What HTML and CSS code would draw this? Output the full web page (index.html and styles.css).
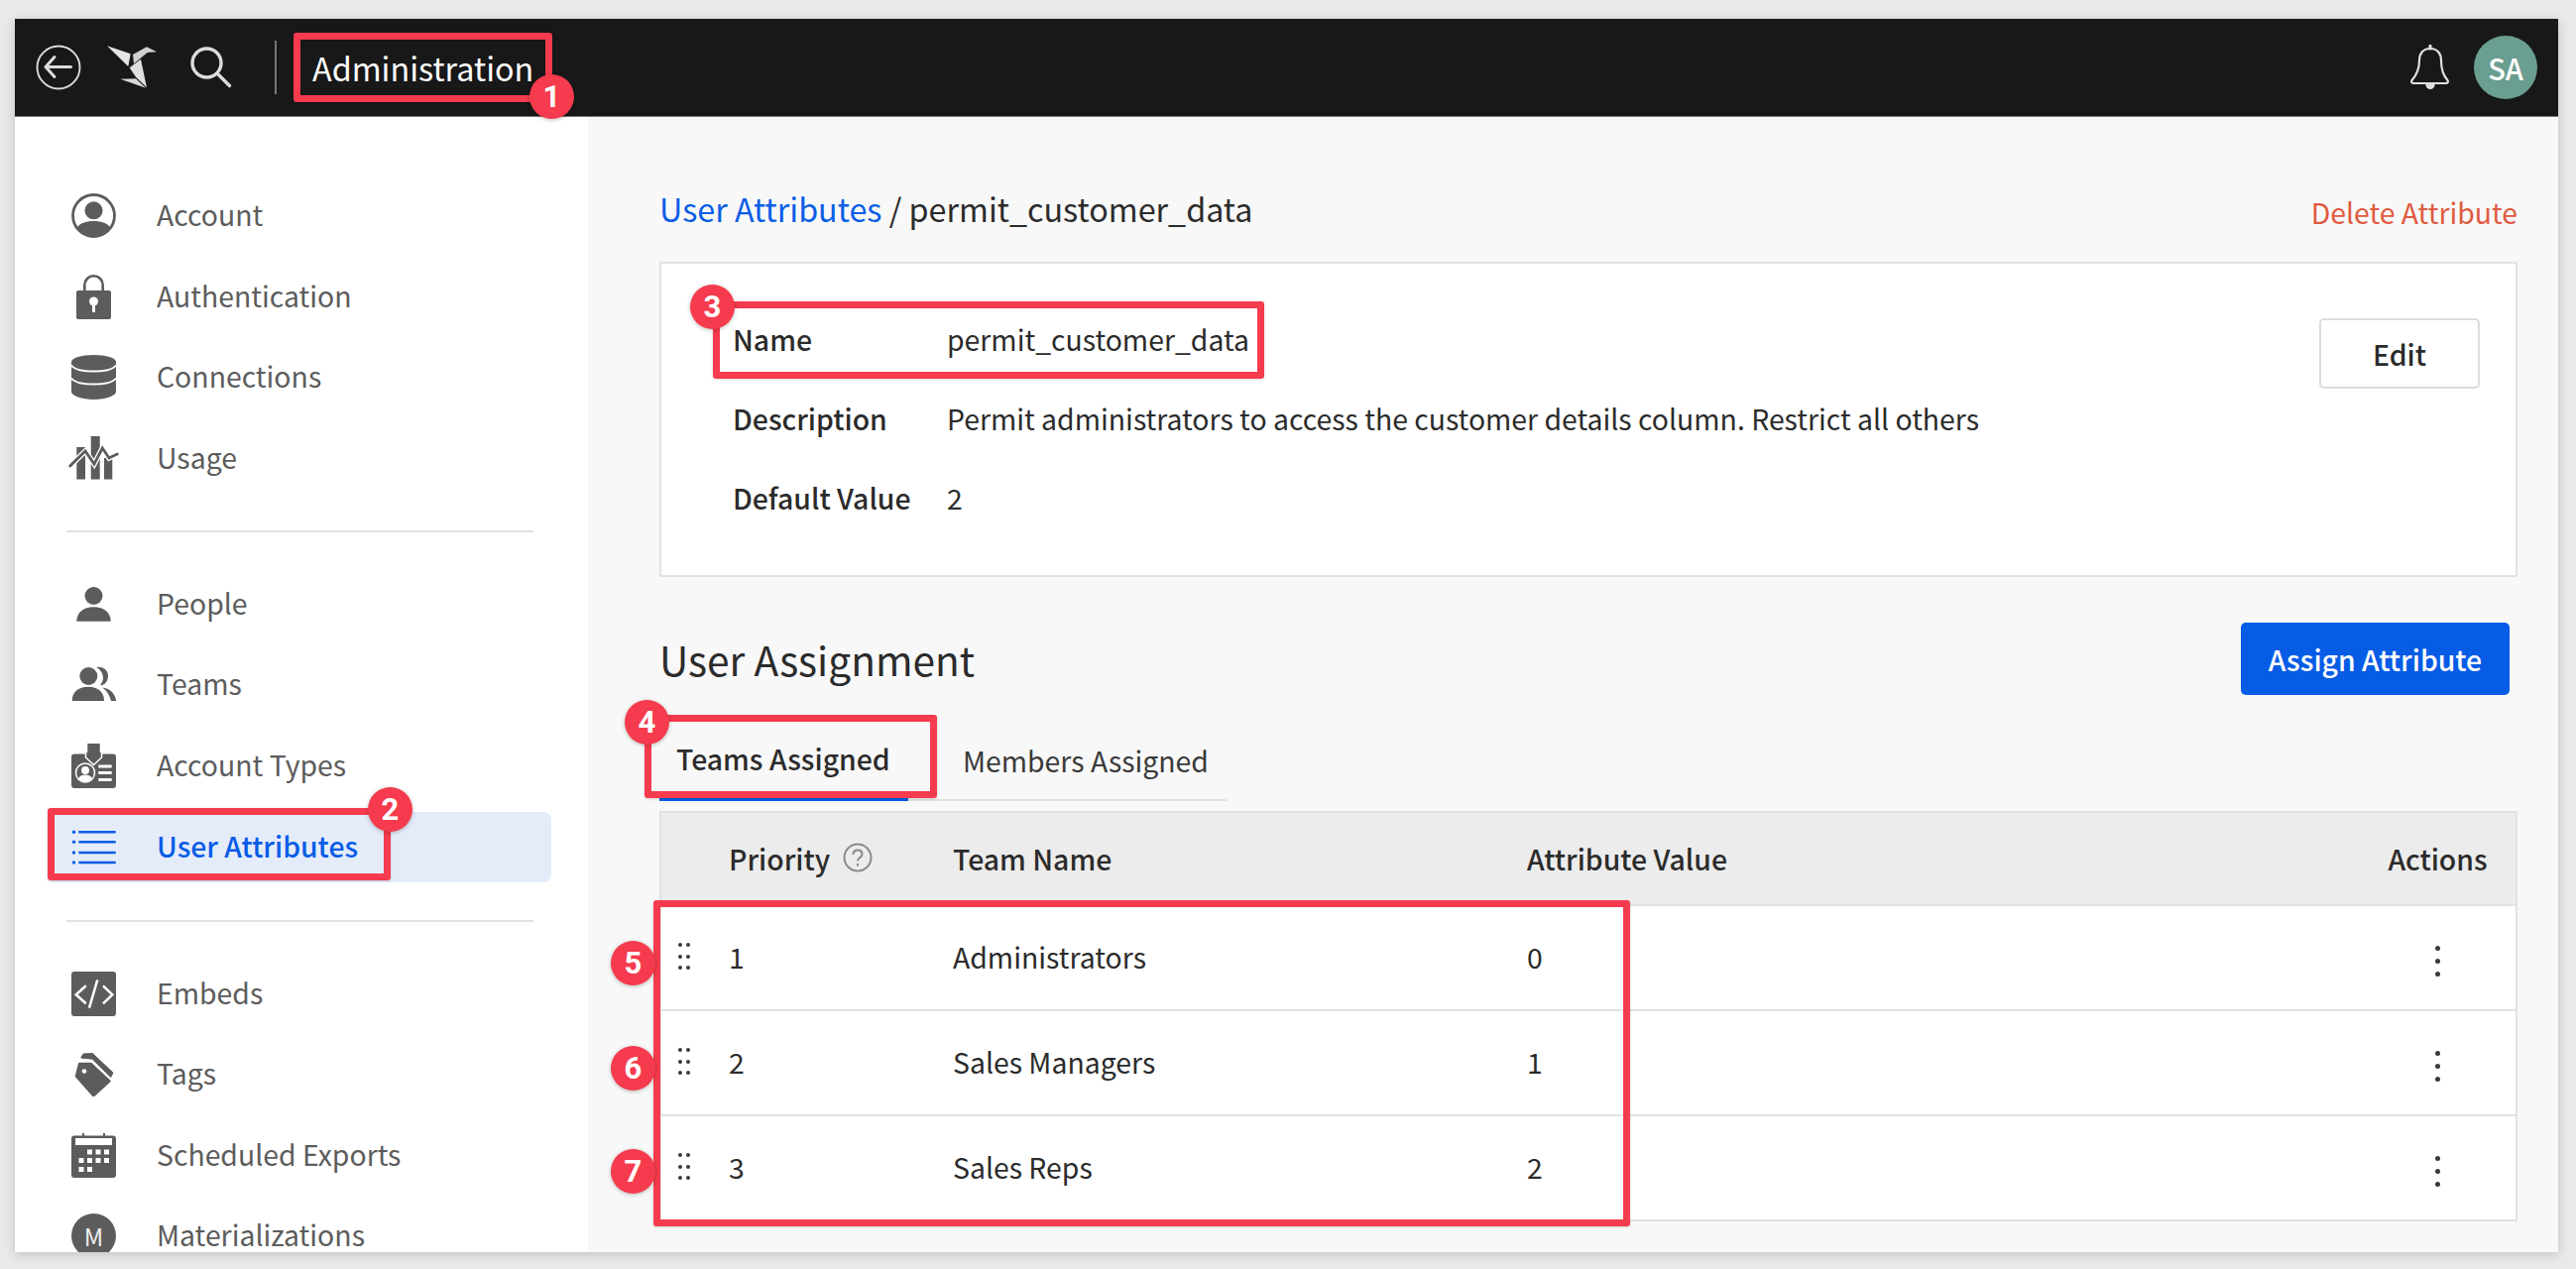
FILE: index.html
```html
<!DOCTYPE html>
<html lang="en">
<head>
  <meta charset="UTF-8" />
  <meta name="viewport" content="width=device-width, initial-scale=1.0" />
  <title>User Attributes</title>
  <link rel="stylesheet" href="styles.css">
</head>
<body>
  <div class="page">
    <div class="window">
      <header class="topbar">
        <svg class="top-icon back-icon" viewBox="0 0 46 46" fill="none" stroke="#dcdcdc" stroke-width="1.900" stroke-linecap="round" stroke-linejoin="round">
          <circle cx="23" cy="23" r="21.500"/>
          <path d="M35.500 22.500H10M19 12.500l-9 10 9 10" stroke-width="3"/>
        </svg>
        <svg class="top-icon logo-icon" viewBox="265 52 150 130">
          <path d="M265 52L336 76 329 114z" fill="#e4e4e4"/>
          <path d="M343 78L385 55 415 70 387 72 346 106z" fill="#d0d0d0"/>
          <path d="M333 118L367 92 385 178 352 146z" fill="#dedede"/>
          <path d="M305 152L352 151 382 179z" fill="#d6d6d6"/>
        </svg>
        <svg class="top-icon search-icon" viewBox="0 0 42 42" fill="none" stroke="#dcdcdc" stroke-width="3.400" stroke-linecap="round">
          <circle cx="16.500" cy="16.500" r="14.500"/>
          <path d="M27 27L39.500 39.500"/>
        </svg>
        <span class="top-divider"></span>
        <span class="top-title">Administration</span>
        <svg class="bell-icon" viewBox="0 0 40 46" fill="none" stroke="#e0e0e0" stroke-width="2.200" stroke-linejoin="round">
          <path d="M20 4c-7.500 0-11 5.500-11 12 0 9-3 15-7.500 20-1 1.500 0 3 1.500 3h33c1.500 0 2.500-1.500 1.500-3C33 31 31 25 31 16c0-6.500-3.500-12-11-12z"/>
          <path d="M20 1v3" stroke-width="3" stroke-linecap="round"/>
          <path d="M16.500 40.500a3.500 3.500 0 0 0 7 0z" fill="#e0e0e0"/>
        </svg>
        <span class="avatar">SA</span>
      </header>

      <div class="main">
        <nav class="sidebar">
          <div class="nav-group">
            <a class="nav-item">
              <svg class="nav-icon" viewBox="0 0 45 45">
                <circle cx="22.500" cy="22.500" r="21" fill="none" stroke="#5c5c5c" stroke-width="2.800"/>
                <circle cx="22.500" cy="17.300" r="9" fill="#5c5c5c"/>
                <path d="M5.500 35c3-5 9-7 17-7s14 2 17 7c-4 5-10 8.500-17 8.500S9.500 40 5.500 35z" fill="#5c5c5c"/>
              </svg>
              <span>Account</span>
            </a>
            <a class="nav-item">
              <svg class="nav-icon" viewBox="0 0 45 45">
                <path d="M13.300 18V9.200a9.200 9.200 0 0 1 18.400 0V18" transform="translate(0 1.300)" fill="none" stroke="#5c5c5c" stroke-width="2.600"/>
                <rect x="5" y="16" width="35" height="29" rx="2" fill="#5c5c5c"/>
                <circle cx="22.500" cy="27" r="4.500" fill="#fff"/>
                <path d="M21 29h3v9h-3z" fill="#fff"/>
              </svg>
              <span>Authentication</span>
            </a>
            <a class="nav-item">
              <svg class="nav-icon" viewBox="0 0 45 45">
                <path d="M0 7c0-4 10-7 22.500-7S45 3 45 7v30c0 4-10 8-22.500 8S0 41 0 37z" fill="#5c5c5c"/>
                <path d="M0 10.500c3 4 12 6 22.500 6S42 14.500 45 10.500M0 23.500c3 4 12 6 22.500 6S42 27.500 45 23.500" fill="none" stroke="#fff" stroke-width="1.800"/>
              </svg>
              <span>Connections</span>
            </a>
            <a class="nav-item">
              <svg class="nav-icon usage-icon" viewBox="0 0 45 45">
                <path d="M5.300 11H14v32.500H5.300zM19.700 0h9v43.500h-9zM33 22h8.300v21.500H33z" fill="#5c5c5c"/>
                <path d="M-1.300 30L14 15l9 13 8.300-16L38 22l8.300-4" fill="none" stroke="#fff" stroke-width="5.500"/>
                <path d="M-1.300 30L14 15l9 13 8.300-16L38 22l8.300-4" fill="none" stroke="#5c5c5c" stroke-width="2.800" stroke-linecap="round"/>
              </svg>
              <span>Usage</span>
            </a>
          </div>
          <div class="nav-divider"></div>
          <div class="nav-group">
            <a class="nav-item">
              <svg class="nav-icon" viewBox="0 0 45 45" fill="#5c5c5c">
                <circle cx="22.500" cy="14" r="9"/>
                <path d="M5.300 39.700C5.300 31 12 25.300 22.500 25.300S39.700 31 39.700 39.700z"/>
              </svg>
              <span>People</span>
            </a>
            <a class="nav-item">
              <svg class="nav-icon" viewBox="0 0 45 45" fill="#5c5c5c">
                <circle cx="17.300" cy="14" r="9"/>
                <path d="M.7 39C.7 30 7 24.700 17 24.700S33 30 33 39z"/>
                <path d="M25 5c8-1 12 4 12 9s-4 10-8 9c4-4 5-13-4-18zM31 25.500c8 .5 13 6.500 14.300 13.500H40c-2-7-5-11-9-13.500z"/>
              </svg>
              <span>Teams</span>
            </a>
            <a class="nav-item">
              <svg class="nav-icon" viewBox="0 0 45 45">
                <rect y="10.500" width="45" height="34.500" rx="3" fill="#5c5c5c"/>
                <path d="M14.500 9v5l8 7.500 8-7.500V9" fill="#5c5c5c" stroke="#fff" stroke-width="1.500"/>
                <path d="M16.300 0h12.400v13l-6.200 6-6.200-6z" fill="#5c5c5c"/>
                <circle cx="14" cy="29.500" r="9.500" fill="none" stroke="#fff" stroke-width="1.500"/>
                <circle cx="14" cy="27" r="4" fill="#fff"/>
                <path d="M7 35.500c1-3 4-4 7-4s6 1 7 4c-2 2-4.500 3-7 3s-5-1-7-3z" fill="#fff"/>
                <path d="M27.300 21.500h13.400v3H27.300zM27.300 28h13.400v3H27.300zM27.300 35h13.400v3H27.300z" fill="#fff"/>
              </svg>
              <span>Account Types</span>
            </a>
            <a class="nav-item active">
              <svg class="nav-icon" viewBox="0 0 45 45" fill="#075ce6">
                <circle cx="2.500" cy="7.300" r="1.700"/>
                <circle cx="2.500" cy="17.300" r="1.700"/>
                <circle cx="2.500" cy="28" r="1.700"/>
                <circle cx="2.500" cy="38" r="1.700"/>
                <path d="M7.300 6h37.400v2.600H7.300zM7.300 16h37.400v2.600H7.300zM7.300 26.700h37.400v2.600H7.300zM7.300 36.700h37.400v2.600H7.300z"/>
              </svg>
              <span>User Attributes</span>
            </a>
          </div>
          <div class="nav-divider second"></div>
          <div class="nav-group">
            <a class="nav-item">
              <svg class="nav-icon" viewBox="0 0 45 45">
                <rect width="45" height="45" rx="3" fill="#5c5c5c"/>
                <path d="M14.700 14.300L4.700 23.300l10 9M32 14.300l9.300 9-9.300 9M26.300 8.300L18 36.700" fill="none" stroke="#fff" stroke-width="2.500"/>
              </svg>
              <span>Embeds</span>
            </a>
            <a class="nav-item">
              <svg class="nav-icon" viewBox="0 0 45 45">
                <path d="M8 11.800h11.700l19 17.700-16.400 15L4.700 24.500z" fill="#5c5c5c" stroke="#5c5c5c" stroke-width="2" stroke-linejoin="round"/>
                <path d="M9.700 6l2.300-4 9.300-.5L42 21l-2.300 4.500-18.400-18.300z" fill="#5c5c5c" stroke="#5c5c5c" stroke-linejoin="round"/>
                <circle cx="13" cy="19.500" r="2.300" fill="#fff"/>
              </svg>
              <span>Tags</span>
            </a>
            <a class="nav-item">
              <svg class="nav-icon" viewBox="0 0 45 45" fill="#5c5c5c">
                <path d="M3 2.500h8V0h2v2.500h19V0h2v2.500h8a3 3 0 0 1 3 3V42a3 3 0 0 1-3 3H3a3 3 0 0 1-3-3V5.500a3 3 0 0 1 3-3z"/>
                <path d="M4 5h37v7H4zM16 16.500h5v5h-5zM24.500 16.500h5v5h-5zM33 16.500h5v5h-5zM7.500 25h5v5h-5zM16 25h5v5h-5zM24.500 25h5v5h-5zM33 25h5v5h-5zM7.500 34h5v5h-5zM16 34h5v5h-5z" fill="#fff"/>
              </svg>
              <span>Scheduled Exports</span>
            </a>
            <a class="nav-item">
              <span class="nav-icon m-icon">M</span>
              <span>Materializations</span>
            </a>
          </div>
        </nav>

        <section class="content">
          <div class="crumb-row">
            <div class="crumbs"><a class="crumb-link">User Attributes</a> / permit_customer_data</div>
            <a class="delete-link">Delete Attribute</a>
          </div>

          <div class="card">
            <dl class="details">
              <dt>Name</dt>
              <dd>permit_customer_data</dd>
              <dt>Description</dt>
              <dd>Permit administrators to access the customer details column. Restrict all others</dd>
              <dt>Default Value</dt>
              <dd>2</dd>
            </dl>
            <button class="edit-btn">Edit</button>
          </div>

          <div class="assign-row">
            <h2>User Assignment</h2>
            <button class="assign-btn">Assign Attribute</button>
          </div>

          <div class="tabs">
            <a class="tab active">Teams Assigned</a>
            <a class="tab">Members Assigned</a>
          </div>

          <table class="teams">
            <thead>
              <tr>
                <th class="col-handle"></th>
                <th class="col-priority">
                  <span class="priority-head">Priority
                    <svg class="help-icon" viewBox="0 0 30 30" fill="none" stroke="#8a8a8a" stroke-width="2">
                      <circle cx="15" cy="15" r="13.500"/>
                      <path d="M10.500 12c0-3 2-4.500 4.500-4.500s4.500 1.500 4.500 4c0 3.500-4.500 3.500-4.500 7"/>
                      <path d="M15 21v2.500"/>
                    </svg>
                  </span>
                </th>
                <th class="col-team">Team Name</th>
                <th class="col-value">Attribute Value</th>
                <th class="col-actions">Actions</th>
              </tr>
            </thead>
            <tbody>
              <tr>
                <td><span class="handle"><i></i><i></i><i></i><i></i><i></i><i></i></span></td>
                <td>1</td>
                <td>Administrators</td>
                <td>0</td>
                <td class="col-actions"><span class="kebab"><i></i><i></i><i></i></span></td>
              </tr>
              <tr>
                <td><span class="handle"><i></i><i></i><i></i><i></i><i></i><i></i></span></td>
                <td>2</td>
                <td>Sales Managers</td>
                <td>1</td>
                <td class="col-actions"><span class="kebab"><i></i><i></i><i></i></span></td>
              </tr>
              <tr>
                <td><span class="handle"><i></i><i></i><i></i><i></i><i></i><i></i></span></td>
                <td>3</td>
                <td>Sales Reps</td>
                <td>2</td>
                <td class="col-actions"><span class="kebab"><i></i><i></i><i></i></span></td>
              </tr>
            </tbody>
          </table>
        </section>
      </div>
    </div>

    <!-- Red callouts drawn over the screenshot -->
    <div class="callout box-title"></div>
    <div class="callout box-nav"></div>
    <div class="callout box-name"></div>
    <div class="callout box-tab"></div>
    <div class="callout box-rows"></div>
    <span class="badge badge-1">1</span>
    <span class="badge badge-2">2</span>
    <span class="badge badge-3">3</span>
    <span class="badge badge-4">4</span>
    <span class="badge badge-5">5</span>
    <span class="badge badge-6">6</span>
    <span class="badge badge-7">7</span>
  </div>
</body>
</html>
```

FILE: styles.css
```css
* {
  box-sizing: border-box;
}

html, body {
  margin: 0;
  padding: 0;
}

body {
  font-family: "Noto Sans CJK SC", "Noto Sans", sans-serif;
  font-size: 28.4px;
  color: #2b2b2b;
  background-color: #e9e9e9;
}

.page {
  position: relative;
  width: 2598px;
  height: 1280px;
  padding: 19px 18px 17px 15px;
  overflow: hidden;
}

.window {
  display: flex;
  flex-direction: column;
  height: 1244px;
  overflow: hidden;
  background-color: #f8f8f8;
  box-shadow: 0 2px 10px rgba(0, 0, 0, 0.18);
}

/* Top bar */
.topbar {
  display: flex;
  align-items: center;
  flex: none;
  height: 99px;
  padding: 0 21px 0 21px;
  background-color: #181818;
  border-bottom: 1px solid #777;
}

.top-icon {
  flex: none;
}

.back-icon {
  width: 46px;
  height: 46px;
}

.logo-icon {
  width: 50px;
  height: 44px;
  margin-left: 26px;
}

.search-icon {
  width: 42px;
  height: 42px;
  margin-left: 34px;
}

.top-divider {
  width: 2px;
  height: 54px;
  margin-left: 43px;
  background-color: #777;
}

.top-title {
  margin-left: 36px;
  font-size: 32.3px;
  line-height: 44px;
  color: #fff;
}

.bell-icon {
  width: 40px;
  height: 46px;
  margin-left: auto;
}

.avatar {
  display: flex;
  align-items: center;
  justify-content: center;
  width: 64px;
  height: 64px;
  margin-left: 24px;
  border-radius: 50%;
  background-color: #6a9e90;
  color: #fff;
  font-size: 29px;
  font-weight: 500;
}

.main {
  display: flex;
  flex: 1;
  min-height: 0;
}

/* Sidebar */
.sidebar {
  flex: none;
  width: 578px;
  padding: 64px 37px 0 33px;
  background-color: #fff;
}

.nav-group {
  display: flex;
  flex-direction: column;
  gap: 10.6px;
}

.nav-item {
  display: flex;
  align-items: center;
  flex: none;
  height: 71px;
  padding-left: 24px;
  border-radius: 8px;
  color: #5c5c5c;
  line-height: 34px;
}

.nav-item span:last-child {
  margin-bottom: 3px;
}

.nav-icon {
  flex: none;
  width: 45px;
  height: 45px;
  margin-right: 41px;
}

.usage-icon {
  overflow: visible;
}

.nav-item.active {
  background-color: #e4ecfa;
  color: #075ce6;
  font-weight: 500;
}

.m-icon {
  display: flex;
  align-items: center;
  justify-content: center;
  border-radius: 50%;
  background-color: #5c5c5c;
  color: #eee;
  font-size: 24px;
  line-height: 24px;
}

.nav-divider {
  height: 2px;
  margin: 37px 18px 37px 19px;
  background-color: #e2e2e2;
}

.nav-divider.second {
  margin-top: 38px;
}

/* Content */
.content {
  flex: 1;
  padding: 0 41px 0 72px;
}

.crumb-row {
  display: flex;
  align-items: center;
  justify-content: space-between;
  height: 146px;
  padding-top: 38px;
}

.crumbs {
  font-size: 32.3px;
  color: #2b2b2b;
}

.crumb-link {
  color: #0a5de6;
}

.delete-link {
  margin-top: 6px;
  color: #e05a40;
}

.card {
  display: flex;
  justify-content: space-between;
  height: 318px;
  padding: 55px 36px 0 72px;
  background-color: #fff;
  border: 2px solid #e2e2e2;
}

.details {
  display: grid;
  grid-template-columns: 216px 1fr;
  grid-auto-rows: 80px;
  align-items: center;
  margin: -20px 0 0 0;
  height: 240px;
}

.details dt {
  font-weight: 500;
}

.details dd {
  margin: 0;
}

.edit-btn {
  width: 162px;
  height: 71px;
  background-color: #fff;
  border: 2px solid #dcdcdc;
  border-radius: 5px;
  font-family: inherit;
  font-size: 28.4px;
  font-weight: 500;
  color: #2b2b2b;
}

.assign-row {
  display: flex;
  align-items: center;
  justify-content: space-between;
  height: 73px;
  margin: 46px 8px 0 0;
}

.assign-row h2 {
  margin: 0;
  font-size: 40.6px;
  font-weight: 400;
  color: #2b2b2b;
}

.assign-btn {
  width: 271px;
  height: 73px;
  background-color: #075ce6;
  border: 0;
  border-radius: 5px;
  font-family: inherit;
  font-size: 28.4px;
  font-weight: 500;
  color: #fff;
}

.tabs {
  display: flex;
  width: 572px;
  height: 81px;
  margin-top: 26px;
  border-bottom: 2px solid #e2e2e2;
}

.tab {
  display: flex;
  align-items: center;
  flex: none;
  height: 81px;
  padding-left: 55px;
  padding-bottom: 3px;
  white-space: nowrap;
  color: #3a3a3a;
}

.tab.active {
  width: 251px;
  padding-left: 17px;
  font-weight: 500;
  color: #2b2b2b;
  border-bottom: 4px solid #075ce6;
}

/* Table */
.teams {
  width: 1874px;
  margin-top: 10px;
  border-collapse: collapse;
  table-layout: fixed;
  background-color: #fff;
  border: 2px solid #e2e2e2;
}

.teams th {
  height: 94px;
  padding: 0 0 2px 0;
  background-color: #ececec;
  border-bottom: 2px solid #e2e2e2;
  font-weight: 500;
  text-align: left;
}

.teams td {
  height: 106px;
  padding: 0 0 3px 0;
  border-bottom: 2px solid #e2e2e2;
}

.col-handle {
  width: 69px;
}

.col-priority {
  width: 226px;
}

.col-team {
  width: 579px;
}

.teams .col-actions {
  width: 158px;
  text-align: center;
}

.priority-head {
  display: flex;
  align-items: center;
  gap: 13px;
}

.help-icon {
  width: 30px;
  height: 30px;
}

.handle {
  display: grid;
  grid-template-columns: 4px 4px;
  grid-auto-rows: 4px;
  gap: 7.3px 4px;
  width: 12px;
  margin-left: 17px;
}

.handle i {
  display: block;
  border-radius: 50%;
  background-color: #3a3a3a;
}

.kebab i {
  display: block;
  width: 5px;
  height: 5px;
  border-radius: 50%;
  background-color: #3a3a3a;
}

.kebab {
  display: inline-flex;
  flex-direction: column;
  gap: 8px;
  vertical-align: middle;
}

/* Callouts */
.callout {
  position: absolute;
  border: 7px solid #f53b4d;
  border-radius: 3px;
  box-shadow: 0 1px 3px rgba(0, 0, 0, 0.15);
}

.box-title {
  left: 296px;
  top: 33px;
  width: 261px;
  height: 70px;
}

.box-nav {
  left: 48px;
  top: 815px;
  width: 346px;
  height: 73px;
}

.box-name {
  left: 719px;
  top: 304px;
  width: 556px;
  height: 78px;
}

.box-tab {
  left: 650px;
  top: 721px;
  width: 295px;
  height: 84px;
}

.box-rows {
  left: 659px;
  top: 908px;
  width: 985px;
  height: 329px;
}

.badge {
  position: absolute;
  display: flex;
  align-items: center;
  justify-content: center;
  width: 45px;
  height: 45px;
  border-radius: 50%;
  background-color: #f53b4d;
  color: #fff;
  font-family: Roboto, "Liberation Sans", sans-serif;
  font-size: 31px;
  font-weight: 700;
  box-shadow: 0 1px 4px rgba(0, 0, 0, 0.25);
}

.badge-1 { left: 534px; top: 75px; }
.badge-2 { left: 371px; top: 794px; }
.badge-3 { left: 696px; top: 287px; }
.badge-4 { left: 630px; top: 706px; }
.badge-5 { left: 616px; top: 949px; }
.badge-6 { left: 616px; top: 1055px; }
.badge-7 { left: 616px; top: 1159px; }
```
